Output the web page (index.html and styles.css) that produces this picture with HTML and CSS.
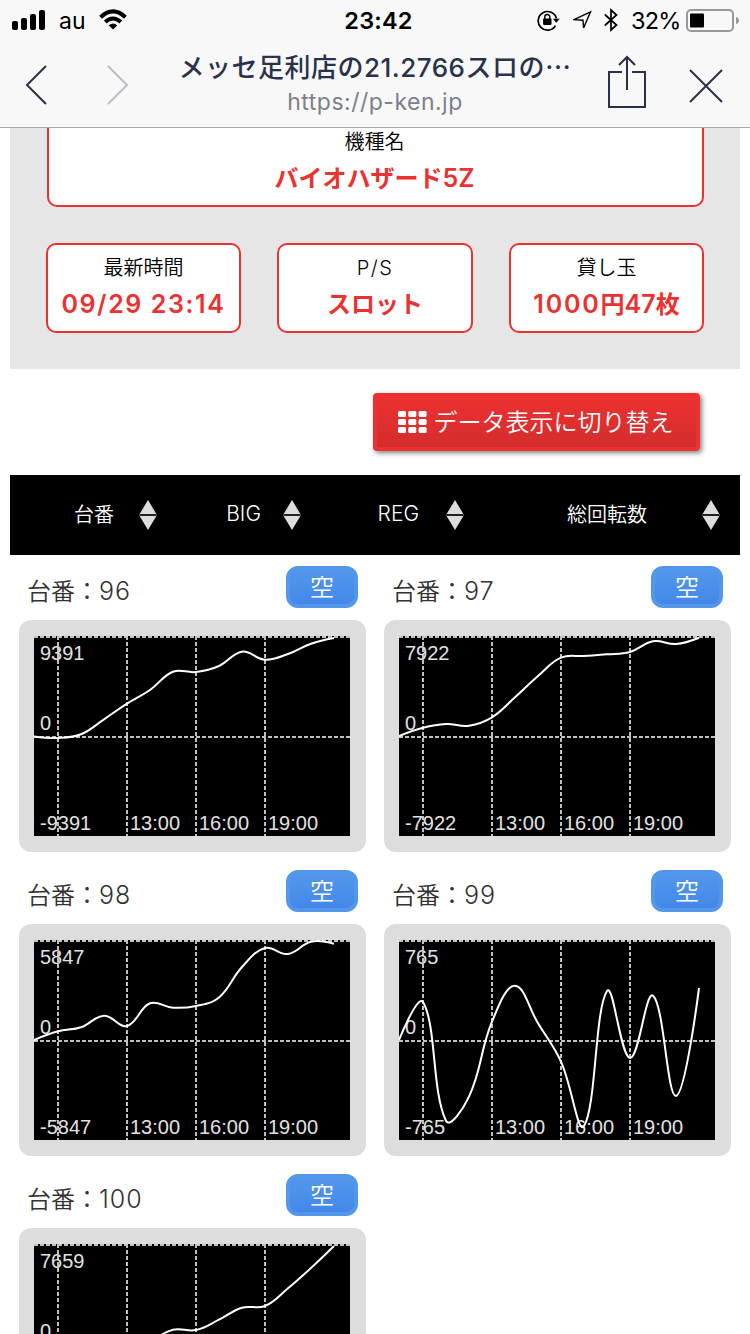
FILE: index.html
```html
<!DOCTYPE html>
<html lang="ja">
<head>
  <meta charset="UTF-8" />
  <meta name="viewport" content="width=device-width, initial-scale=1.0" />
  <title>メッセ足利店の21.2766スロのデータ</title>
  <link rel="stylesheet" href="styles.css">
</head>
<body>
  <header class="browser">
    <div class="status">
      <div class="status-left">
        <svg width="34" height="22" viewBox="0 0 34 22">
          <rect x="0" y="12" width="6" height="9" rx="2" />
          <rect x="9" y="9" width="6" height="12" rx="2" />
          <rect x="18" y="5" width="6" height="16" rx="2" />
          <rect x="27" y="1" width="6" height="20" rx="2" />
        </svg>
        <span class="carrier">au</span>
        <svg width="28" height="22" viewBox="0 0 28 22">
          <path d="M1.6 8.2 Q14 -3.4 26.4 8.2" fill="none" stroke="#000" stroke-width="4" />
          <path d="M6.2 13 Q14 5.8 21.8 13" fill="none" stroke="#000" stroke-width="3.8" />
          <path d="M9.8 16.4 Q14 12.8 18.2 16.4 L14 20.6 Z" />
        </svg>
      </div>
      <div class="clock">23:42</div>
      <div class="status-right">
        <svg class="lock" width="24" height="24" viewBox="0 0 24 24">
          <path d="M18.5 17.6 A9.3 9.3 0 1 1 19.5 10.5" fill="none" stroke="#000" stroke-width="1.7" />
          <path d="M15.9 10.8 H22.7 L19.3 14.7 Z" />
          <rect x="6.1" y="10.5" width="8.4" height="6.4" rx=".8" />
          <path d="M7.8 11.5 V9 a2.5 2.5 0 0 1 5 0 V11.5" fill="none" stroke="#000" stroke-width="1.4" />
        </svg>
        <svg class="arrow" width="20" height="22" viewBox="0 0 20 22">
          <path d="M1 10.6 L17.5 2.8 L10.6 19 L10 11.2 Z" fill="none" stroke="#000" stroke-width="1.4" />
        </svg>
        <svg class="bluetooth" width="14" height="24" viewBox="0 0 14 24">
          <path d="M.8 6.5 L12.5 17 L7 22 V2 L12.5 7 L.8 17.5" fill="none" stroke="#000" stroke-width="1.7" />
        </svg>
        <span class="percent">32%</span>
        <svg width="54" height="24" viewBox="0 0 54 24">
          <rect x="1" y="2" width="46" height="21" rx="4" fill="none" stroke="#999" stroke-width="2" />
          <rect x="4" y="5.5" width="14" height="14" rx="1" />
          <path d="M50 9 Q53 10 53 12.5 Q53 15 50 16 Z" fill="#999" />
        </svg>
      </div>
    </div>
    <div class="nav">
      <svg class="back" width="24" height="42" viewBox="0 0 24 42"><path d="M22 2 L3 21 L22 40" /></svg>
      <svg class="forward" width="24" height="42" viewBox="0 0 24 42"><path d="M2 2 L21 21 L2 40" /></svg>
      <div class="page-name">
        <div class="page-title">メッセ足利店の<span>21.2766</span>スロの<b>…</b></div>
        <div class="page-url">https://p-ken.jp</div>
      </div>
      <svg class="share" width="40" height="54" viewBox="0 0 40 54">
        <path d="M15 17 H2 V52 H38 V17 H25 M20 35 V2 M12 10 L20 2 L28 10" />
      </svg>
      <svg class="close" width="36" height="36" viewBox="0 0 36 36"><path d="M2 2 L34 34 M34 2 L2 34" /></svg>
    </div>
  </header>

  <main>
    <section class="info">
      <div class="info-box machine">
        <div class="info-label">機種名</div>
        <div class="info-value">バイオハザード<span>5Z</span></div>
      </div>
      <div class="info-row">
        <div class="info-box">
          <div class="info-label">最新時間</div>
          <div class="info-value"><span class="time">09/29 23:14</span></div>
        </div>
        <div class="info-box">
          <div class="info-label"><span>P/S</span></div>
          <div class="info-value">スロット</div>
        </div>
        <div class="info-box">
          <div class="info-label">貸し玉</div>
          <div class="info-value"><span class="yen">1000</span>円<span>47</span>枚</div>
        </div>
      </div>
    </section>

    <div class="switch-row">
      <button class="switch">
        <svg width="29" height="22" viewBox="0 0 29 22">
          <g id="cells">
            <rect x="0" width="8" height="6" rx="1.5" />
            <rect x="10.3" width="8" height="6" rx="1.5" />
            <rect x="20.6" width="8" height="6" rx="1.5" />
          </g>
          <use href="#cells" y="8" />
          <use href="#cells" y="16" />
        </svg>
        <span>データ表示に切り替え</span>
      </button>
    </div>

    <div class="sort">
      <div class="sort-item"><span>台番</span><i></i></div>
      <div class="sort-item"><span class="en">BIG</span><i></i></div>
      <div class="sort-item"><span class="en">REG</span><i></i></div>
      <div class="sort-item"><span>総回転数</span><i></i></div>
    </div>

    <div class="list" id="list"></div>
  </main>

  <script>
    // x = minutes scaled to 316px, y = pixels from the top of the graph
    const xs = [0, 24, 47, 70, 93, 116, 139, 162, 185, 208, 231, 254, 277, 300];
    const machines = [
      { no: 96, max: 9391, ys: [100.5, 102, 98.3, 83.3, 67.7, 54, 35.7, 36, 30, 15.7, 23.7, 18, 7.7, 2] },
      { no: 97, max: 7922, ys: [100, 91.7, 88, 89.7, 81.3, 61.3, 40, 21.7, 20, 18.3, 16, 5.3, 8, 1.7] },
      { no: 98, max: 5847, ys: [100, 91.3, 87.3, 75.7, 86, 63.3, 67.7, 66, 57.5, 27, 8, 14, 1.7, 3.7] },
      { no: 99, max: 765, ys: [100, 62, 180.7, 156.7, 81.7, 45.7, 83.3, 121.7, 186, 51, 118, 55.7, 156, 48] },
      { no: 100, max: 7659, ys: [100, 104, 108, 110, 104, 97, 85.7, 86, 75.7, 63.7, 62, 44.3, 24, 2] }
    ];
    const tension = 0.4;

    function spline(ys) {
      const last = xs.length - 1;
      let d = `M${xs[0]} ${ys[0]}`;
      let cx = xs[0], cy = ys[0];
      for (let i = 1; i <= last; i++) {
        const x = xs[i], y = ys[i];
        if (i === last) {
          d += ` C${cx} ${cy} ${x} ${y} ${x} ${y}`;
          break;
        }
        const dx = xs[i + 1] - xs[i - 1];
        const dy = ys[i + 1] - ys[i - 1];
        const before = Math.hypot(x - xs[i - 1], y - ys[i - 1]);
        const after = Math.hypot(xs[i + 1] - x, ys[i + 1] - y);
        const a = tension * before / (before + after);
        const b = tension * after / (before + after);
        d += ` C${cx} ${cy} ${x - a * dx} ${y - a * dy} ${x} ${y}`;
        cx = x + b * dx;
        cy = y + b * dy;
      }
      return d;
    }

    document.getElementById("list").innerHTML = machines.map(m => `
      <div class="machine-card">
        <div class="card-head">
          <div class="card-no">台番：<span>${m.no}</span></div>
          <div class="vacant">空</div>
        </div>
        <div class="graph">
          <svg width="316" height="200" viewBox="0 0 316 200">
            <path class="grid" d="M0 1 H316 M0 101 H316 M24 0 V200 M93 0 V200 M162 0 V200 M231 0 V200" />
            <text x="6" y="24">${m.max}</text>
            <text x="6" y="94">0</text>
            <text x="6" y="194">-${m.max}</text>
            <text x="96" y="194">13:00</text>
            <text x="165" y="194">16:00</text>
            <text x="234" y="194">19:00</text>
            <path class="line" d="${spline(m.ys)}" />
          </svg>
        </div>
      </div>`).join("");
  </script>
</body>
</html>
```
FILE: styles.css
```css
* {
  box-sizing: border-box;
}
body {
  margin: 0;
  width: 750px;
  height: 1334px;
  overflow: hidden;
  background: #fff;
  color: #000;
  font-family: Inter, "Noto Sans CJK JP", sans-serif;
}
svg {
  display: block;
  flex: none;
}

/* browser bars */
.browser {
  height: 128px;
  background: #f8f8f8;
  border-bottom: 1px solid #aaa;
}
.status {
  display: grid;
  grid-template-columns: 1fr auto 1fr;
  height: 40px;
  padding: 0 10px 0 12px;
  align-items: center;
}
.status-left,
.status-right {
  display: flex;
  align-items: center;
}
.status-right {
  justify-content: flex-end;
}
.carrier {
  margin: 0 13px 0 13px;
  padding-top: 2px;
  width: 27px;
  font-size: 23px;
}
.clock {
  padding: 1px 0 0 5px;
  font-size: 23.5px;
  font-weight: 600;
  letter-spacing: 0.2px;
}
.arrow {
  margin-left: 12px;
}
.bluetooth {
  margin-left: 11px;
}
.percent {
  width: 49px;
  margin: 0 6px 0 13px;
  font-size: 23.5px;
  letter-spacing: -0.8px;
}
.nav {
  display: flex;
  height: 87px;
}
.nav svg {
  fill: none;
  stroke: #29324a;
  stroke-width: 2;
}
.back {
  margin: 24px 0 0 24px;
}
.nav .forward {
  margin: 24px 0 0 58px;
  stroke: #bcbec6;
}
.page-name {
  width: 400px;
  margin: 8px 0 0 45px;
  text-align: center;
  white-space: nowrap;
}
.page-title {
  height: 38px;
  line-height: 36px;
  font-size: 26px;
  font-weight: 500;
  letter-spacing: 0.5px;
  color: #29324a;
}
.page-title b {
  font-family: "Noto Sans CJK JP", sans-serif;
  font-weight: 500;
}
.page-url {
  height: 32px;
  line-height: 32px;
  font-size: 23px;
  color: #7d808c;
  letter-spacing: 0.5px;
}
.share {
  margin: 15px 0 0 32px;
}
.close {
  margin: 28px 0 0 41px;
}

/* hall information */
main {
  width: 730px;
  margin: 0 auto;
}
.info {
  height: 241px;
  padding: 0 36px;
  background: #e6e6e6;
}
.info-box {
  height: 90px;
  padding-top: 8px;
  border: 2px solid #ec3131;
  border-radius: 10px;
  background: #fff;
  text-align: center;
  white-space: nowrap;
}
.machine {
  height: 79px;
  margin-left: 1px;
  padding: 0 2px 0 0;
  border-top: 0;
  border-radius: 0 0 10px 10px;
}
.info-label {
  height: 30px;
  line-height: 30px;
  font-size: 20px;
  font-weight: 350;
}
.info-label span {
  letter-spacing: 1.5px;
}
.machine .info-label {
  line-height: 28px;
}
.info-value {
  height: 40px;
  line-height: 43px;
  font-size: 24px;
  font-weight: bold;
  color: #ec3131;
}
.machine .info-value {
  line-height: 40px;
}
.info-value span {
  font-size: 25px;
  font-weight: 600;
}
.info-value .time {
  letter-spacing: 1.6px;
}
.info-value .yen {
  letter-spacing: 1.8px;
}
.info-row {
  display: grid;
  grid-template-columns: 195px 196px 195px;
  justify-content: space-between;
  margin-top: 36px;
}

/* switch button */
.switch-row {
  display: flex;
  justify-content: flex-end;
  height: 106px;
  padding: 24px 40px 0 0;
}
.switch {
  display: flex;
  align-items: center;
  justify-content: center;
  gap: 7px;
  width: 327px;
  height: 58px;
  padding: 0 2px 0 0;
  border: 4px solid #ec3131;
  border-radius: 4px;
  background: linear-gradient(#ec3131, #d32d2d);
  box-shadow: 2px 2px 5px rgba(0, 0, 0, 0.5);
  color: #fff;
  font: 350 24px/1 "Noto Sans CJK JP", sans-serif;
}
.switch svg {
  fill: #fff;
}
.switch span {
  padding-bottom: 2px;
}

/* sort header */
.sort {
  display: grid;
  grid-template-columns: 147px 144px 163px 1fr;
  height: 80px;
  align-items: center;
  background: #000;
  color: #fff;
  font-size: 20px;
  font-weight: 350;
}
.sort-item {
  display: flex;
  align-items: center;
  justify-content: flex-end;
  padding-bottom: 4px;
}
.sort-item:last-child {
  padding-right: 20px;
}
.sort-item .en {
  font-size: 21px;
}
.sort-item i {
  width: 18px;
  height: 30px;
  margin: 4px 0 0 25px;
  background: linear-gradient(#222, #222) 0 14px / 18px 2px no-repeat, #ddd;
  clip-path: polygon(50% 0, 100% 50%, 50% 100%, 0 50%);
}
.sort-item:nth-child(2) i {
  margin-left: 22px;
}
.sort-item:nth-child(3) i {
  margin-left: 27px;
}
.sort-item:last-child i {
  margin-left: 55px;
}

/* machine graphs */
.list {
  display: grid;
  grid-template-columns: 365px 365px;
  grid-auto-rows: 304px;
}
.machine-card {
  padding: 11px 9px 0;
}
.card-head {
  display: flex;
  justify-content: space-between;
  height: 54px;
  padding: 0 8px;
}
.card-no {
  height: 50px;
  line-height: 51px;
  font-size: 24px;
  font-weight: 350;
  color: #333;
}
.card-no span {
  font-size: 25px;
  font-weight: 300;
  letter-spacing: 1px;
}
.vacant {
  width: 72px;
  height: 42px;
  border: 4px solid #5297ec;
  border-radius: 12px;
  background: linear-gradient(#5297ec, #4388e8);
  color: #fff;
  font-size: 24px;
  font-weight: 350;
  line-height: 36px;
  text-align: center;
}
.graph {
  width: 347px;
  height: 232px;
  padding: 16px 15px;
  border-radius: 12px;
  background: #ddd;
}
.graph svg {
  background: #000;
}
.graph text {
  font-family: "Liberation Sans", sans-serif;
  font-size: 20px;
  fill: #e2e2e2;
}
.grid {
  fill: none;
  stroke: #c0c0c0;
  stroke-width: 2;
  stroke-dasharray: 4 2;
}
.line {
  fill: none;
  stroke: #fff;
  stroke-width: 2;
}
```
